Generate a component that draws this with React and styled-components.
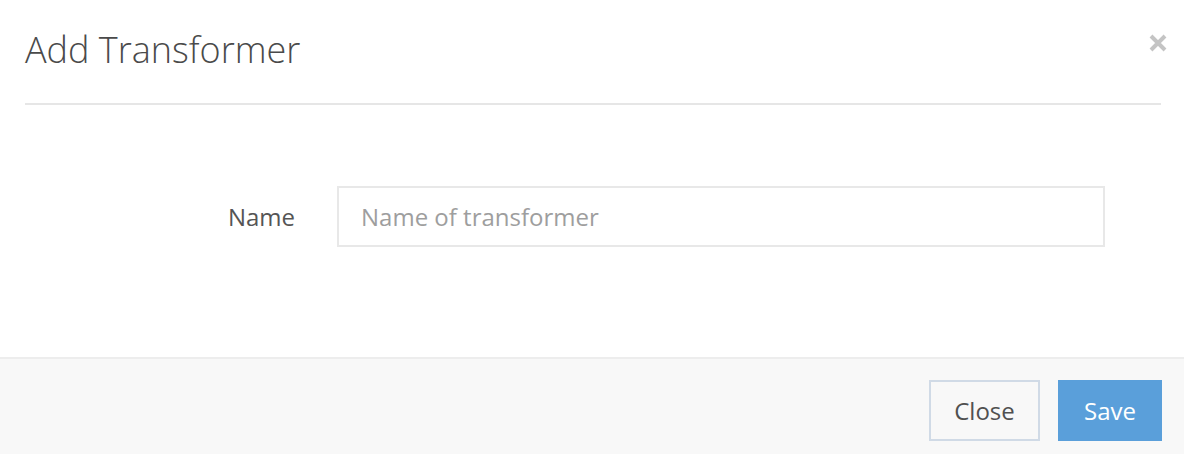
import React from "react";
import styled, { createGlobalStyle } from "styled-components";

const GlobalStyle = createGlobalStyle`
  html, body {
    margin: 0;
    padding: 0;
    background: #fff;
    font-family: "Open Sans", "Liberation Sans", sans-serif;
  }
`;

const Modal = styled.div`
  width: 1184px;
  height: 454px;
  display: flex;
  flex-direction: column;
  background: #fff;
  overflow: hidden;
`;

const Header = styled.div`
  display: flex;
  justify-content: space-between;
  align-items: flex-start;
  margin: 0 23px 0 25px;
  height: 103px;
  border-bottom: 2px solid #e6e6e6;
`;

const Title = styled.h4`
  margin: 26px 0 0 0;
  font-size: 36px;
  font-weight: 300;
  color: #4a4a4a;
  line-height: 48px;
`;

const CloseIcon = styled.button`
  border: none;
  background: transparent;
  padding: 0;
  margin: 33px -7px 0 0;
  cursor: pointer;
  color: #c4c4c4;
  display: flex;
`;

const Body = styled.div`
  height: 252px;
  flex-shrink: 0;
  display: flex;
  align-items: flex-start;
  padding-top: 81px;
  box-sizing: border-box;
`;

const FormRow = styled.div`
  display: grid;
  grid-template-columns: 295px 768px;
  column-gap: 42px;
  align-items: center;
`;

const Label = styled.label`
  text-align: right;
  font-size: 24px;
  color: #555;
`;

const TextInput = styled.input`
  box-sizing: border-box;
  height: 61px;
  border: 2px solid #e8e8e8;
  padding: 0 22px;
  font-family: inherit;
  font-size: 24px;
  color: #555;
  outline: none;
  &::placeholder {
    color: #9e9e9e;
  }
`;

const Footer = styled.div`
  flex: 1;
  background: #f8f8f8;
  border-top: 2px solid #ededed;
  display: flex;
  justify-content: flex-end;
  align-items: flex-start;
  gap: 18px;
  padding: 21px 22px 0 0;
`;

const Button = styled.button`
  box-sizing: border-box;
  height: 61px;
  padding: 0 22px;
  min-width: ${(p) => (p.primary ? "104px" : "111px")};
  font-family: inherit;
  font-size: 24px;
  cursor: pointer;
  border: 2px solid ${(p) => (p.primary ? "#5a9fda" : "#d0dae6")};
  background: ${(p) => (p.primary ? "#5a9fda" : "transparent")};
  color: ${(p) => (p.primary ? "#fff" : "#505050")};
`;

export default function App() {
  return (
    <>
      <GlobalStyle />
      <Modal>
        <Header>
          <Title>Add Transformer</Title>
          <CloseIcon aria-label="close">
            <svg width="20" height="20" viewBox="0 0 20 20">
              <path d="M3 3 L17 17 M17 3 L3 17" stroke="currentColor" strokeWidth="4" />
            </svg>
          </CloseIcon>
        </Header>
        <Body>
          <FormRow>
            <Label>Name</Label>
            <TextInput placeholder="Name of transformer" />
          </FormRow>
        </Body>
        <Footer>
          <Button>Close</Button>
          <Button primary>Save</Button>
        </Footer>
      </Modal>
    </>
  );
}
